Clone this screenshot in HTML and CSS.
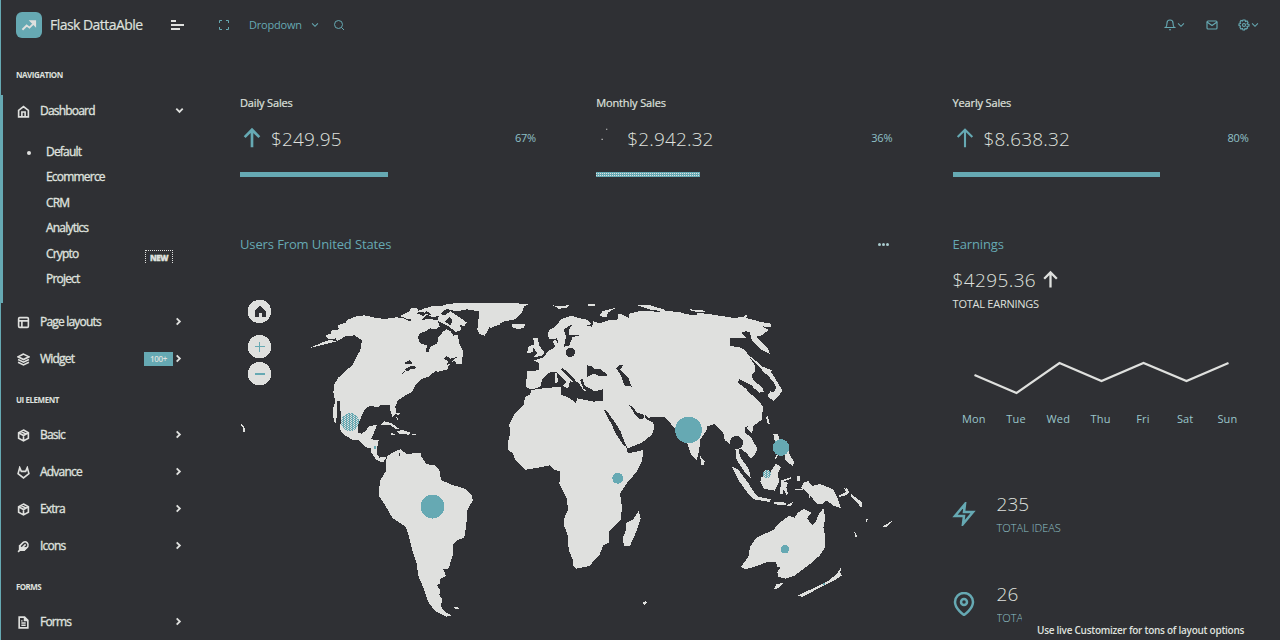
FILE: index.html
```html
<!DOCTYPE html>
<html lang="en">
<head>
<meta charset="utf-8">
<title>Flask DattaAble</title>
<link rel="stylesheet" href="styles.css">
</head>
<body>
<svg class="defs" aria-hidden="true">
  <symbol id="down" viewBox="0 0 24 24"><path d="M5 8l7 7 7-7"/></symbol>
  <symbol id="right" viewBox="0 0 24 24"><path d="M8 5l7 7-7 7"/></symbol>
  <symbol id="up" viewBox="0 0 24 24"><path d="M12 22V3M4 11l8-8 8 8"/></symbol>
  <symbol id="box" viewBox="0 0 24 24"><path d="M12 2l9 5v10l-9 5-9-5V7zM3 7l9 5 9-5M12 12v10M7.500 4.500l9 5"/></symbol>
</svg>
<div class="app">
  <aside class="sidebar">
    <div class="brand">
      <span class="logo"><svg viewBox="0 0 24 24"><path d="M2 18l6-6 4 3 7-7M14 6h6v6z"/></svg></span>
      <span class="brand-name">Flask DattaAble</span>
      <span class="burger"><i></i><i></i><i></i></span>
    </div>
    <nav class="menu">
      <div class="caption wide">NAVIGATION</div>
      <div class="group">
        <a class="item"><svg class="ico" viewBox="0 0 24 24"><path d="M3 10l9-7 9 7v12H3zM9 22v-9h6v9"/></svg><span>Dashboard</span><svg class="chev"><use href="#down"/></svg></a>
        <ul class="sub">
          <li class="current">Default</li>
          <li>Ecommerce</li>
          <li>CRM</li>
          <li>Analytics</li>
          <li>Crypto<span class="new">NEW</span></li>
          <li>Project</li>
        </ul>
      </div>
      <a class="item"><svg class="ico" viewBox="0 0 24 24"><rect x="3" y="3" width="18" height="18" rx="2"/><path d="M3 9h18M9 21V9"/></svg><span>Page layouts</span><svg class="chev"><use href="#right"/></svg></a>
      <a class="item"><svg class="ico" viewBox="0 0 24 24"><path d="M12 2L2 7l10 5 10-5zM2 17l10 5 10-5M2 12l10 5 10-5"/></svg><span>Widget</span><b class="hundred">100+</b><svg class="chev"><use href="#right"/></svg></a>
      <div class="caption wide">UI ELEMENT</div>
      <a class="item"><svg class="ico"><use href="#box"/></svg><span>Basic</span><svg class="chev"><use href="#right"/></svg></a>
      <a class="item"><svg class="ico" viewBox="0 0 24 24"><path d="M22 14l-10 8-10-8 3-11 3 7h8l3-7z"/></svg><span>Advance</span><svg class="chev"><use href="#right"/></svg></a>
      <a class="item"><svg class="ico"><use href="#box"/></svg><span>Extra</span><svg class="chev"><use href="#right"/></svg></a>
      <a class="item"><svg class="ico" viewBox="0 0 24 24"><path d="M5 12v7h8l4-4H9z" fill="currentColor"/><path d="M20 12a6 6 0 0 0-8-8L5 11v8h8zM16 8L2 22M17 15H9"/></svg><span>Icons</span><svg class="chev"><use href="#right"/></svg></a>
      <div class="caption">FORMS</div>
      <a class="item"><svg class="ico" viewBox="0 0 24 24"><path d="M14 2H4v20h16V8zM14 2v6h6M16 13H8M16 17H8M10 9H8"/></svg><span>Forms</span><svg class="chev"><use href="#right"/></svg></a>
    </nav>
  </aside>

  <div class="page">
    <header class="topbar">
      <svg class="full" viewBox="0 0 24 24"><path d="M8 3H3v5M16 3h5v5M21 16v5h-5M3 16v5h5"/></svg>
      <span class="dropdown">Dropdown</span>
      <svg class="caret first"><use href="#down"/></svg>
      <svg class="search" viewBox="0 0 24 24"><circle cx="11" cy="11" r="8"/><path d="M17 17l5 5"/></svg>
      <div class="tools">
        <svg class="tool" viewBox="0 0 24 24"><path d="M18 8A6 6 0 0 0 6 8c0 7-3 9-3 9h18s-3-2-3-9M10 21.500h4"/></svg>
        <svg class="caret"><use href="#down"/></svg>
        <svg class="tool mail" viewBox="0 0 24 24"><rect x="2" y="4" width="20" height="16" rx="2"/><path d="M22 6l-10 7L2 6"/></svg>
        <svg class="tool gear" viewBox="0 0 24 24"><circle cx="12" cy="12" r="3"/><path d="M10 2h4l1 3 3-1 2 3-2 3 4 1v3l-4 1 1 3-3 2-2-1-1 3h-3l-1-3-3 1-2-3 1-3-3-1v-3l3-1-1-3 2-3 3 1z"/></svg>
        <svg class="caret"><use href="#down"/></svg>
      </div>
    </header>

    <main class="grid">
      <section class="sales">
        <h6>Daily Sales</h6>
        <div class="row"><svg class="arrow"><use href="#up"/></svg><span class="amount">$249.95</span><span class="pct">67%</span></div>
        <div class="track"><div class="bar" style="width:50%"></div></div>
      </section>
      <section class="sales">
        <h6>Monthly Sales</h6>
        <div class="row"><svg class="arrow dots" viewBox="0 0 24 24"><path d="M5 13.500h1.200M10 2.500h1.200"/></svg><span class="amount">$2.942.32</span><span class="pct">36%</span></div>
        <div class="track"><div class="bar dotted" style="width:35%"></div></div>
      </section>
      <section class="sales">
        <h6>Yearly Sales</h6>
        <div class="row"><svg class="arrow thin"><use href="#up"/></svg><span class="amount">$8.638.32</span><span class="pct">80%</span></div>
        <div class="track"><div class="bar" style="width:70%"></div></div>
      </section>

      <section class="users">
        <div class="head"><h5>Users From United States</h5><span class="more"><i></i><i></i><i></i></span></div>
        <svg class="map" viewBox="240 290 652 330">
          <defs>
            <pattern id="speckle" width="3" height="2" patternUnits="userSpaceOnUse"><rect width="3" height="2" class="sea-tint"/><rect width="1" height="1" class="land"/><rect x="1.500" y="1" width="1" height="1" class="land"/></pattern>
          </defs>
          <g transform="translate(230 290) scale(.33333)" class="land">
            <!-- North and Central America -->
            <path d="M243 173L270 160 300 150 322 154 318 145 298 148 286 138 303 130 302 122 326 118 324 105 348 98 350 90 376 80 404 76 430 82 462 87 500 82 520 84 535 92 575 90 600 86 622 92 630 110 615 118 632 128 650 118 662 124 670 137 684 134 687 160 698 182 697 222 680 222 672 210 655 230 652 238 623 246 617 242 596 260 573 268 555 288 546 306 520 320 503 332 496 350 498 371 487 380 481 360 481 346 455 344 444 351 418 348 404 358 392 385 384 402 383 428 394 431 408 423 417 408 441 405 431 430 422 448 446 450 441 475 441 492 448 503 470 500 460 516 450 515 437 507 424 487 424 475 408 472 388 451 370 451 340 433 330 418 333 385 331 355 329 333 322 333 320 372 319 398 312 397 308 358 316 335 310 308 312 285 325 263 367 225 377 205 385 190 394 150 374 136 345 139 321 154Z"/>
            <path d="M510 78L540 63 542 54 560 54 565 62 585 55 610 48 650 46 670 52 645 60 630 75 610 82 590 74 575 91 535 88ZM622 92L628 72 645 75 662 64 675 73 710 97 703 108 690 105 695 120 678 126 660 112 643 102ZM635 48L655 41 720 39 810 39 890 44 850 70 810 84 810 105 780 110 764 137 750 133 742 120 748 64 710 58 680 64 655 58Z"/>
            <path d="M453 405L463 394 484 399 508 417 499 418 480 405ZM500 425L516 419 540 428 538 434 523 433 506 431ZM481 433L486 429 495 434 486 437ZM546 431h12v4h-12ZM497 370l14-2-3 6-6 1ZM499 382l5 1-1 7ZM30 401l7 3 8 11 1 10-8 2 2-12Z"/>
            <!-- South America -->
            <path d="M470 500L490 486 512 478 530 492 572 488 574 500 590 523 613 525 629 542 633 570 665 584 704 596 726 615 728 632 712 660 709 705 703 742 680 752 668 766 670 790 656 835 640 838 648 858 630 868 630 880 620 885 630 900 628 915 638 930 632 948 645 966 665 976 648 980 616 964 594 935 583 900 565 858 560 820 548 785 536 735 528 712 512 700 488 685 462 640 446 617 450 572 467 545ZM670 952l10-2 6 6-8 3Z"/>
            <path class="sea" d="M566 132L590 122 600 115 630 120 637 130 624 142 622 160 600 172 595 187 586 187 592 167 570 160 565 145ZM368 185l6-15 10 2-10 18ZM386 148l10 4-6 35-5-6ZM519 220l20-10 8 7-2 5ZM514 255l15-20 20-9 12 9-18 2-7 7-9-3ZM640 205l10-6 12 7 20-5-14 11-6 10-12 2 4-10ZM678 63l40-4 28 8-4 25-26 2-24-12ZM560 70l20 8 8-9-20-4ZM590 63l14 10-7 2-14-8ZM645 96l12-15 10 9-5 16ZM505 488l7 4-4 8Z"/>
          </g>
          <g transform="translate(490 290) scale(.33333)" class="land">
            <!-- Greenland and Iceland -->
            <path d="M0 38L60 38 115 43 102 50 95 70 75 88 40 95 15 108 0 116ZM66 101l20 2 20-2-4 13-20 4-15-7ZM188 46l20 3 32-4-10 9-24 2ZM294 43h22v4h-22ZM330 75l8-12 38-9-22 14-4 14-18-3ZM438 44l42 2 40 12 8 8-50-8Z"/>
            <!-- Europe and western Asia -->
            <path d="M173 130L178 120 194 111 215 87 245 77 265 84 292 89 306 102 286 108 307 110 309 94 330 100 350 92 385 88 383 70 400 75 416 84 416 72 440 65 470 62 520 68 570 68 600 74 600 480 590 456 548 408 525 381 500 381 474 383 463 371 466 385 490 398 492 415 485 435 456 458 414 475 400 452 342 358 338 298 322 308 300 296 283 287 291 305 272 300 268 286 245 258 216 232 214 240 248 275 240 274 236 292 218 286 231 276 199 246 175 248 157 268 151 290 126 299 108 291 111 243 147 241 146 218 132 212 162 202 172 185 196 171 188 153 196 150 208 165 221 161 226 138 218 120 210 112 199 146 177 148Z"/>
            <path d="M130 145l13-1 5 22 15 22-7 10-24 3 10-12-8-9ZM116 168l16-3-4 22-17 2ZM194 249l8 0 1 28-8 2ZM276 303l16 2-4 4-12-2ZM216 287l18-3 1 11ZM198 120l20-15 12 20-8 40-14 4-6-20Z"/>
            <!-- Africa -->
            <path d="M125 300L160 295 212 290 214 315 235 321 257 339 262 325 310 335 338 332 356 358 380 405 408 468 414 490 459 478 457 510 438 548 410 580 390 610 395 645 394 688 356 725 356 758 340 766 328 795 298 828 258 836 249 828 248 808 236 780 234 740 222 705 224 680 235 660 229 622 208 582 211 545 189 537 181 526 146 533 107 539 76 510 68 490 53 478 54 455 60 432 58 404 75 370 101 345 105 322 121 312ZM446 663l6 22-14 42-18 40-18 1-4-23 10-25 1-22 20-10ZM458 938l8-4 5 4-8 6Z"/>
            <path class="sea" d="M222 170L228 140 221 120 236 107 245 106 237 119 237 135 268 136 248 141 242 155 238 166ZM291 226l12 2 10 8 15 0 28 20-24 3-22-8-18 10-2-18ZM378 234l12-10 10 1-9 14 14 15 11 12 9 24-22-4-10-30ZM342 359l8 4 28 38 14 24 16 42-5 2-27-40-7-17ZM417 345l8 4 18 20 16 4 4 8-6 6-12-2-10-12ZM412 479l13-2 32-19 2 22-42 10ZM213 294l7 4 35 0 8-22 20 27 54-2 2 31-30 0-48-11-5 15-21-13-22-10ZM271 272l6-6 13 36-10-6Z"/>
            <circle cx="241" cy="187" r="14" class="sea"/>
            <circle cx="324" cy="229" r="4"/>
          </g>
          <g transform="translate(660 290) scale(.33333)" class="land">
            <!-- Eastern Asia -->
            <path d="M0 62L60 66 78 75 110 75 112 68 160 74 215 83 252 82 300 95 332 101 334 112 308 109 325 120 308 135 289 140 325 178 330 193 300 176 275 150 270 126 248 130 263 143 209 145 209 168 240 172 257 182 284 226 286 246 276 252 278 269 307 294 311 306 297 308 275 288 252 288 233 277 238 267 258 287 262 303 297 333 308 350 307 388 280 408 256 410 254 428 274 442 292 477 284 495 272 506 260 490 245 478 235 476 240 500 267 538 272 563 253 545 230 510 226 475 194 450 190 430 162 402 141 410 140 420 120 450 118 480 110 511 93 492 80 455 42 405 12 380 0 380ZM120 497l14 18-2 10-8 0ZM90 58l45 4v4l-40-2ZM250 78l8-3 5 4-6 4Z"/>
            <path d="M261 192l26 20 20 18 28 10-2 15-18-4-20-24ZM321 252l14-4 33 55-16 18-11 13-18-16 8-14 10 3 8-16-8-13ZM317 380l7-1 5 22-5 2ZM258 410l22-2-4 24ZM340 431l14 1 5 18-8 10-8-10ZM343 508l10-18 2 3-4 10ZM374 490l12-8 4 14 12 18-3 14-12-8-10-8ZM348 520l14 12-8 18 3 25-12 27-34-6-10-20 2-14 26-12Z"/>
            <path d="M216 530l18 8 30 40 18 28 12 14 38 8-2 8-48-8-14-12-30-42ZM340 636l40 2-2 7-35-2ZM380 646l22-12-12 16ZM362 572l34-12-4 6-20 8 12 5-5 14 5 20-5 1-8-15-4 14-6 0ZM412 557l7 1 1 17-8-3ZM404 596l28 0-3 4-24 0ZM432 576l14-2 10 14 24-6 40 16 14 30 8 26-20-6-22-16-14 10-16-1-14-18-20-20-12-10ZM536 617l20-10 4-15 8 14-10 10-20 5ZM572 611l34 26-2 20-8-15-24-24ZM618 686l5 0-1 12-5-1ZM583 724l6 8 3 10-7-1ZM670 708l26-15-13 16-12 4ZM550 590l14 14-6 3ZM447 612l4 6-2 8Z"/>
            <!-- Australia and New Zealand -->
            <path d="M404 684L412 670 431 656 455 668 441 685 457 706 468 696 474 676 490 655 496 685 490 712 496 740 496 770 480 796 450 822 404 857 376 866 354 860 352 846 362 831 350 830 349 815 325 815 288 829 254 838 244 830 266 798 270 770 290 742 340 720 356 700 388 677ZM350 882l20-3-13 14-16 6ZM414 916l50-23 40-20 25-20 14-21-2 16 5 8-22 15-44 22-54 28Z"/>
            <circle cx="229" cy="458" r="20" class="sea"/>
            <path class="sea" d="M238 267l20 10 26 14-22 8-28-20ZM245 128l13-5 12 8 4 18-19-8Z"/>
            <path d="M262 272l18-2 28 24 3 12-14 2-20-20Z"/>
          </g>
          <g class="sea-tint">
            <circle cx="432.500" cy="506.500" r="12"/><circle cx="617.700" cy="478.300" r="5.400"/><circle cx="688.500" cy="430" r="13.400"/><circle cx="781" cy="447.500" r="8.300"/><circle cx="785" cy="549.300" r="4.200"/><circle cx="375" cy="447.500" r="1.400"/><circle cx="824" cy="584" r="1.500"/>
          </g>
          <circle cx="350" cy="422" r="9" fill="url(#speckle)"/><circle cx="767" cy="474" r="4.300" fill="url(#speckle)"/>
          <g class="land"><circle cx="259.500" cy="311.500" r="11.700"/><circle cx="259.500" cy="346.700" r="11.700"/><circle cx="259.500" cy="373.700" r="11.700"/></g>
          <path class="sea" d="M260 306l5.500 5v6h-4v-4h-3v4h-4v-6Z"/>
          <path class="sea-tint" d="M255 346h4v-4h1v4h5v1h-5v5h-1v-5h-4ZM255 373h10v1.500h-10Z"/>
        </svg>
      </section>

      <section class="earn">
        <h5>Earnings</h5>
        <div class="total">$4295.36 <svg class="arrow"><use href="#up"/></svg></div>
        <div class="total-label">TOTAL EARNINGS</div>
        <svg class="line" viewBox="0 0 296 60"><path d="M21.500 25L63.500 43 106.500 13 148.500 31 190.500 13 233.500 31 275.500 13"/></svg>
        <div class="days"><span>Mon</span><span>Tue</span><span>Wed</span><span>Thu</span><span>Fri</span><span>Sat</span><span>Sun</span></div>
        <div class="stat">
          <svg class="stat-ico" viewBox="0 0 24 24"><path d="M13 2L3 14h9l-1 8 10-12h-9z"/></svg>
          <div><div class="num">235</div><div class="lab">TOTAL IDEAS</div></div>
        </div>
        <div class="stat last">
          <svg class="stat-ico" viewBox="0 0 24 24"><path d="M21 10c0 7-9 13-9 13s-9-6-9-13a9 9 0 0 1 18 0z"/><circle cx="12" cy="10" r="3"/></svg>
          <div><div class="num">26</div><div class="lab">TOTA</div></div>
        </div>
      </section>
    </main>
  </div>
</div>
<div class="note">Use live Customizer for tons of layout options</div>
</body>
</html>
```

FILE: styles.css
```css
:root { --bg: #2f3034; --teal: #66a9b3; --light: #dfe0de; }
* { box-sizing: border-box; }
body { margin: 0; background: var(--bg); color: var(--light); font-family: "Open Sans", "Noto Sans", sans-serif; font-size: 12px; height: 640px; overflow: hidden; }
h5, h6, ul { margin: 0; padding: 0; font-weight: 400; list-style: none; }
svg { display: block; flex: none; fill: none; stroke: currentColor; stroke-width: 2; }
.defs { position: absolute; width: 0; height: 0; }
.app { display: flex; height: 640px; overflow: hidden; }

.sidebar { width: 210px; border-left: 1px solid var(--teal); }
.brand { display: flex; align-items: center; height: 50px; padding-left: 15px; }
.logo { width: 26px; height: 26px; border-radius: 6px; background: var(--teal); display: grid; place-items: center; }
.logo svg { width: 17px; height: 17px; stroke-width: 2.6; }
.brand-name { width: 121px; margin: -1px 0 0 8px; font-size: 14px; letter-spacing: -.54px; white-space: nowrap; -webkit-text-stroke: .2px; }
.burger { display: grid; gap: 2px; }
.burger i { height: 2px; width: 13px; background: var(--light); }
.burger i:first-child { width: 5px; }
.burger i:last-child { width: 9px; }
.menu { padding-top: 2px; }
.caption { height: 39px; padding: 16.5px 0 0 15px; font-size: 8px; line-height: 12px; font-weight: 700; letter-spacing: -.6px; }
.caption.wide { letter-spacing: -.45px; }
.group { display: flow-root; border-left: 3px solid var(--teal); margin: 4px 0 0 -1px; height: 208px; }
.group .item { margin: -3.5px 0 0 -2px; }
.item { display: flex; align-items: center; height: 37px; padding: 0 26px 0 16px; letter-spacing: -.8px; -webkit-text-stroke: .35px; }
.ico { width: 13px; height: 13px; margin-right: 10px; stroke-width: 3; position: relative; top: 1px; }
.item span { margin-right: auto; }
.chev { width: 11px; height: 11px; stroke-width: 4; }
.group .chev { margin-right: -1px; }
.sub { padding: 10px 0 0 43px; letter-spacing: -.8px; -webkit-text-stroke: .35px; }
.sub li { height: 25.6px; line-height: 25.6px; display: flex; align-items: center; }
.current::before { content: ""; width: 4px; height: 4px; border-radius: 50%; background: var(--light); margin: 3px 15px 0 -19px; }
.new { margin: 6px 0 0 auto; width: 28px; height: 13px; border: 1px dotted var(--light); border-bottom: 0; font-size: 8px; line-height: 13px; font-weight: 800; text-align: center; letter-spacing: -.4px; }
.sub li:has(.new) { padding-right: 37px; }
.hundred { width: 29px; height: 14px; background: var(--teal); font-size: 8px; line-height: 13px; font-weight: 600; text-align: center; letter-spacing: -.3px; margin-top: 1px; -webkit-text-stroke: 0; }

.page { flex: 1; }
.topbar { height: 50px; display: flex; align-items: center; padding: 0 20px 0 8px; color: var(--teal); }
.full { width: 12px; height: 12px; margin-right: 19px; }
.dropdown { width: 60px; margin-top: -1px; font-size: 11px; letter-spacing: -.2px; }
.caret { width: 10px; height: 10px; stroke-width: 2.5; }
.first { margin: 0 13px 0 1px; }
.search { width: 12px; height: 12px; }
.tools { display: flex; align-items: center; margin-left: auto; }
.tool { width: 12px; height: 12px; stroke-width: 2.3; }
.mail { margin: 0 20px; }

.grid { display: grid; grid-template-columns: repeat(3, 296px); column-gap: 60.3px; padding-left: 30px; }
.sales { height: 184px; padding-top: 45px; }
.sales h6 { font-size: 11px; line-height: 16px; letter-spacing: -.15px; -webkit-text-stroke: .2px; }
.row { display: flex; align-items: center; height: 28px; margin: 14px 0 19px; }
.arrow { width: 22px; height: 22px; margin: -3px 8px 0 1px; color: var(--teal); stroke-width: 2.9; }
.thin { stroke-width: 2.3; }
.dots { color: var(--light); stroke-width: 1.2; }
.amount { font-size: 19px; font-weight: 300; letter-spacing: .15px; margin-top: -1px; }
.pct { margin: -3px 0 0 auto; font-size: 11px; letter-spacing: -.2px; color: #8fc1c8; }
.track { height: 5px; }
.bar { height: 5px; background: var(--teal); }
.dotted { background: radial-gradient(circle at .5px .5px, var(--light) .5px, transparent .6px) 0 1px / 2px 2px var(--teal); }
h5 { font-size: 13px; line-height: 20px; letter-spacing: -.12px; color: var(--teal); }
.users { grid-column: span 2; }
.head { display: flex; justify-content: space-between; align-items: center; }
.more { display: flex; gap: 1px; margin-right: 3px; }
.more i { width: 3px; height: 3px; border-radius: 50%; background: #a8cacd; }
.map { width: 652px; height: 330px; margin-top: 36px; stroke: none; overflow: visible; shape-rendering: crispEdges; }
.land { fill: var(--light); }
.sea { fill: var(--bg); }
.sea-tint { fill: var(--teal); }

.total { display: flex; align-items: center; height: 28px; margin-top: 12px; font-size: 19px; font-weight: 300; letter-spacing: .38px; }
.total .arrow { color: var(--light); width: 19px; height: 19px; margin: -1px 0 0 5px; }
.total-label { font-size: 11px; line-height: 16px; margin-top: 2px; letter-spacing: -.25px; }
.line { width: 296px; height: 60px; margin-top: 38px; stroke-width: 2.2; }
.days { display: flex; height: 16px; margin: 0 0 45px; align-items: center; font-size: 11px; }
.days span { width: 42.4px; text-align: center; color: #9ac6cb; letter-spacing: .15px; }
.stat { display: flex; align-items: center; height: 90px; }
.stat-ico { width: 24px; height: 24px; color: var(--teal); margin: -5px 21px 0 -1px; stroke-width: 2.5; }
.num { font-size: 19px; font-weight: 300; line-height: 24px; }
.lab { font-size: 11px; font-weight: 300; line-height: 24px; color: #8fc1c8; white-space: nowrap; }
.last .lab { width: 25px; overflow: hidden; }
.note { position: absolute; left: 1022px; top: 618px; width: 258px; height: 22px; padding: 4px 0 0 15px; background: var(--bg); font-size: 10px; line-height: 16px; font-weight: 600; letter-spacing: -.27px; white-space: nowrap; }
```
